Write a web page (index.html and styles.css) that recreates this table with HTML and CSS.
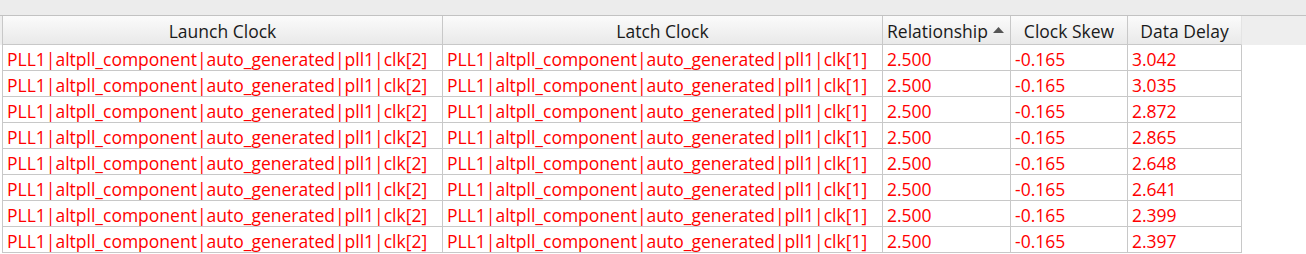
FILE: index.html
```html
<!DOCTYPE html>
<html>
<head>
<meta charset="utf-8">
<link rel="stylesheet" href="styles.css">
</head>
<body>
<div class="topbar"></div>
<div class="table">
  <div class="row head">
    <div class="cell hc center">Launch Clock</div>
    <div class="cell hc center">Latch Clock</div>
    <div class="cell hc sort">Relationship <svg class="arrow" width="11" height="6" viewBox="0 0 11 6"><path d="M0 6 L5.5 0 L11 6 Z" fill="#555"/></svg></div>
    <div class="cell hc center">Clock Skew</div>
    <div class="cell hc center last">Data Delay</div>
  </div>
  <div class="row"><div class="cell">PLL1|altpll_component|auto_generated|pll1|clk[2]</div><div class="cell">PLL1|altpll_component|auto_generated|pll1|clk[1]</div><div class="cell">2.500</div><div class="cell">-0.165</div><div class="cell">3.042</div></div>
  <div class="row"><div class="cell">PLL1|altpll_component|auto_generated|pll1|clk[2]</div><div class="cell">PLL1|altpll_component|auto_generated|pll1|clk[1]</div><div class="cell">2.500</div><div class="cell">-0.165</div><div class="cell">3.035</div></div>
  <div class="row"><div class="cell">PLL1|altpll_component|auto_generated|pll1|clk[2]</div><div class="cell">PLL1|altpll_component|auto_generated|pll1|clk[1]</div><div class="cell">2.500</div><div class="cell">-0.165</div><div class="cell">2.872</div></div>
  <div class="row"><div class="cell">PLL1|altpll_component|auto_generated|pll1|clk[2]</div><div class="cell">PLL1|altpll_component|auto_generated|pll1|clk[1]</div><div class="cell">2.500</div><div class="cell">-0.165</div><div class="cell">2.865</div></div>
  <div class="row"><div class="cell">PLL1|altpll_component|auto_generated|pll1|clk[2]</div><div class="cell">PLL1|altpll_component|auto_generated|pll1|clk[1]</div><div class="cell">2.500</div><div class="cell">-0.165</div><div class="cell">2.648</div></div>
  <div class="row"><div class="cell">PLL1|altpll_component|auto_generated|pll1|clk[2]</div><div class="cell">PLL1|altpll_component|auto_generated|pll1|clk[1]</div><div class="cell">2.500</div><div class="cell">-0.165</div><div class="cell">2.641</div></div>
  <div class="row"><div class="cell">PLL1|altpll_component|auto_generated|pll1|clk[2]</div><div class="cell">PLL1|altpll_component|auto_generated|pll1|clk[1]</div><div class="cell">2.500</div><div class="cell">-0.165</div><div class="cell">2.399</div></div>
  <div class="row"><div class="cell">PLL1|altpll_component|auto_generated|pll1|clk[2]</div><div class="cell">PLL1|altpll_component|auto_generated|pll1|clk[1]</div><div class="cell">2.500</div><div class="cell">-0.165</div><div class="cell">2.397</div></div>
</div>
</body>
</html>
```
FILE: styles.css
```css
html, body {
  margin: 0;
  padding: 0;
  background: #ffffff;
  font-family: "Open Sans", "Noto Sans", sans-serif;
  font-size: 17.5px;
  overflow: hidden;
}
.topbar {
  height: 15px;
  background: #ececec;
  border-bottom: 1px solid #c2c2c2;
}
.table {
  padding-left: 2px;
}
.row {
  display: grid;
  grid-template-columns: 440px 440px 128px 117px 114px;
  border-left: 1px solid #c8c8c8;
  height: 26px;
}
.row.head {
  grid-template-columns: 441px 440px 128px 117px 114px;
  height: 29px;
  background: #eeeeee;
  margin-left: -2px;
  padding-left: 2px;
  border-left: none;
}
.head .cell:first-child {
  border-left: 1px solid #c8c8c8;
}
.cell {
  box-sizing: border-box;
  border-right: 1px solid #c8c8c8;
  border-bottom: 1px solid #c8c8c8;
  color: #ff0000;
  padding-left: 4px;
  padding-top: 4px;
  line-height: 21px;
  white-space: nowrap;
  overflow: hidden;
}
.hc {
  color: #1a1a1a;
  background: linear-gradient(#fbfbfb, #e9e9e9);
  padding-top: 3px;
  line-height: 25px;
}
.hc.last {
  border-right-color: #e4e4e4;
}
.center {
  text-align: center;
  padding-left: 0;
}
.sort {
  display: flex;
  align-items: center;
  gap: 5px;
}
.arrow {
  margin-top: -4px;
}
```
